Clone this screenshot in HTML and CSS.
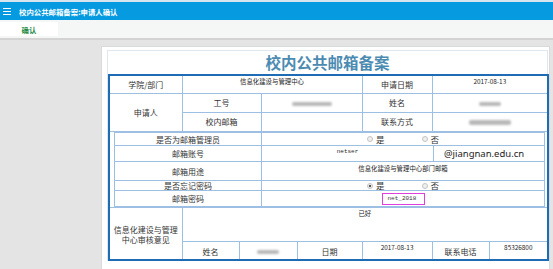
FILE: index.html
```html
<!DOCTYPE html>
<html lang="zh-CN">
  <head>
    <meta charset="UTF-8" />
    <meta name="viewport" content="width=device-width, initial-scale=1.0" />
    <title>校内公共邮箱备案:申请人确认</title>
    <link rel="stylesheet" href="styles.css">
  </head>
  <body>
    <div class="topbar">
      <svg class="menu-icon" width="8" height="7" viewBox="0 0 8 7">
        <path d="M0 0.5H8M0 3.5H8M0 6.5H8" stroke="#fff" stroke-width="1" />
      </svg>
      <span class="topbar-title">校内公共邮箱备案:申请人确认</span>
    </div>

    <div class="toolbar">
      <div class="tab">确认</div>
    </div>

    <div class="panel">
      <div class="panel-inner">
        <h1 class="form-title">校内公共邮箱备案</h1>

        <table class="form">
          <colgroup>
            <col class="c1" /><col class="c2" /><col class="c3" /><col class="c4" />
            <col class="c5" /><col class="c6" /><col class="c7" /><col class="c8" />
          </colgroup>
          <tr class="r1">
            <td class="label">学院/部门</td>
            <td colspan="4" class="val">信息化建设与管理中心</td>
            <td class="label">申请日期</td>
            <td colspan="2" class="val">2017-08-13</td>
          </tr>
          <tr class="r2">
            <td rowspan="2" class="label">申请人</td>
            <td colspan="2" class="label">工号</td>
            <td colspan="2"><span class="blur blur-id"></span></td>
            <td class="label">姓名</td>
            <td colspan="2"><span class="blur blur-name"></span></td>
          </tr>
          <tr class="r3">
            <td colspan="2" class="label">校内邮箱</td>
            <td colspan="2"></td>
            <td class="label">联系方式</td>
            <td colspan="2"><span class="blur blur-phone"></span></td>
          </tr>
          <tr>
            <td colspan="8" class="nest-cell">
              <table class="sub">
                <colgroup><col class="s1" /><col class="s2" /><col class="s3" /></colgroup>
                <tr class="sr1">
                  <td class="label">是否为邮箱管理员</td>
                  <td colspan="2">
                    <div class="radios">
                      <span class="radio"></span><span class="opt">是</span>
                      <span class="radio radio-no"></span><span class="opt">否</span>
                    </div>
                  </td>
                </tr>
                <tr class="sr2">
                  <td class="label">邮箱账号</td>
                  <td class="val mono">netser</td>
                  <td class="domain">@jiangnan.edu.cn</td>
                </tr>
                <tr class="sr3">
                  <td class="label">邮箱用途</td>
                  <td colspan="2" class="val">信息化建设与管理中心部门邮箱</td>
                </tr>
                <tr class="sr4">
                  <td class="label">是否忘记密码</td>
                  <td colspan="2">
                    <div class="radios">
                      <span class="radio checked"></span><span class="opt">是</span>
                      <span class="radio radio-no"></span><span class="opt">否</span>
                    </div>
                  </td>
                </tr>
                <tr class="sr5">
                  <td class="label">邮箱密码</td>
                  <td colspan="2"><span class="pwd">net_2018</span></td>
                </tr>
              </table>
            </td>
          </tr>
          <tr class="r5">
            <td rowspan="2" class="label review">信息化建设与管理<br />中心审核意见</td>
            <td colspan="7" class="val opinion">已好</td>
          </tr>
          <tr class="r6">
            <td class="label sign">姓名</td>
            <td colspan="2"><span class="blur blur-sign"></span></td>
            <td class="label">日期</td>
            <td class="val">2017-08-13</td>
            <td class="label">联系电话</td>
            <td class="val">85326800</td>
          </tr>
        </table>
      </div>
    </div>
  </body>
</html>
```

FILE: styles.css
```css
body {
  margin: 0;
  border-top: 2px solid #d6e5ee;
  background: #e4e4e4;
  font-family: "Noto Sans CJK SC", sans-serif;
  color: #333;
}
.topbar {
  height: 18px;
  background: #069ae0;
  display: flex;
  align-items: center;
  gap: 8px;
  padding-left: 3px;
}
.topbar-title {
  color: #fff;
  font-size: 7.4px;
  font-weight: bold;
}
.toolbar {
  box-sizing: border-box;
  height: 20px;
  padding-top: 2px;
  background: #f5f6f6;
  border-bottom: 2px solid #d3d3d3;
}
.tab {
  width: 58px;
  height: 14px;
  background: #fff;
  color: #1b8a45;
  font-size: 7.4px;
  font-weight: bold;
  display: flex;
  align-items: center;
  justify-content: center;
}
.panel {
  width: 441px;
  margin: 6px 0 0 101px;
  padding: 3px 1px 12px 5px;
  background: #fff;
  border: 1px solid #d8dadc;
}
.panel-inner {
  border: 1px solid #dfe6ec;
  border-bottom: none;
}
.form-title {
  margin: 0;
  height: 23px;
  line-height: 23px;
  text-align: center;
  font-size: 15.5px;
  font-weight: bold;
  color: #4c8bb1;
}
.form {
  width: 439px;
  border-collapse: collapse;
  table-layout: fixed;
  border: 2px solid #1d6cb5;
}
.form td {
  border: 1px solid #9dbfe3;
  padding: 0;
  text-align: center;
  vertical-align: middle;
  font-size: 8px;
  line-height: 10px;
}
.c1 { width: 73px; }
.c2 { width: 57px; }
.c3 { width: 22px; }
.c4 { width: 36px; }
.c5 { width: 65px; }
.c6 { width: 70px; }
.c7 { width: 57px; }
.c8 { width: 59px; }
.form .r1 td.label { height: 17px; }
.form .r2 td.label { height: 18px; }
.form .r3 td.label { height: 18px; }
.form td.opinion { height: 31px; }
.form td.sign { height: 15px; }
.form td.val {
  vertical-align: top;
  padding-top: 2px;
  font-size: 6.4px;
  line-height: 8px;
  color: #222;
}
.form td.review {
  line-height: 10px;
  padding-top: 2px;
}
.form .r6 td.label {
  vertical-align: bottom;
  padding-bottom: 2px;
}
.blur {
  display: inline-block;
  height: 4px;
  background: #b8b8b8;
  border-radius: 2px;
  filter: blur(1.2px);
}
.blur-id { width: 40px; }
.blur-name { width: 22px; }
.blur-phone { width: 42px; height: 5px; }
.blur-sign { width: 22px; }
.form td.nest-cell {
  padding: 0 3px 0 4px;
}
.sub {
  width: 430px;
  border-collapse: collapse;
  table-layout: fixed;
}
.s1 { width: 147px; }
.s2 { width: 172px; }
.s3 { width: 111px; }
.form .sub td { line-height: 9px; }
.sub .sr1 td.label { height: 12px; }
.sub .sr2 td.label { height: 15px; }
.sub .sr3 td.label { height: 18px; }
.sub .sr4 td.label { height: 9px; }
.sub .sr5 td.label { height: 15px; }
.form .sub td.mono {
  font-family: "Liberation Mono", monospace;
  font-size: 6px;
  padding-top: 1px;
}
.form .sub td.domain {
  text-align: left;
  padding-left: 10px;
  font-family: "Noto Sans", sans-serif;
  font-size: 9.5px;
  color: #222;
}
.radios {
  display: flex;
  align-items: center;
  justify-content: center;
}
.radio {
  width: 4px;
  height: 4px;
  border: 1px solid #c4c4c4;
  border-radius: 50%;
  background: #f0f0f0;
  margin-right: 3px;
}
.radio.checked {
  background: radial-gradient(circle, #555 0 1.2px, #f0f0f0 1.5px);
}
.radio-no {
  margin-left: 37px;
}
.opt {
  font-size: 8.5px;
  line-height: 9px;
}
.pwd {
  display: inline-block;
  box-sizing: border-box;
  width: 43px;
  height: 12px;
  padding: 1px 0 0 5px;
  border: 1.5px solid #e03fe0;
  text-align: left;
  vertical-align: top;
  font-family: "Liberation Mono", monospace;
  font-size: 6px;
  line-height: 7px;
}
```
